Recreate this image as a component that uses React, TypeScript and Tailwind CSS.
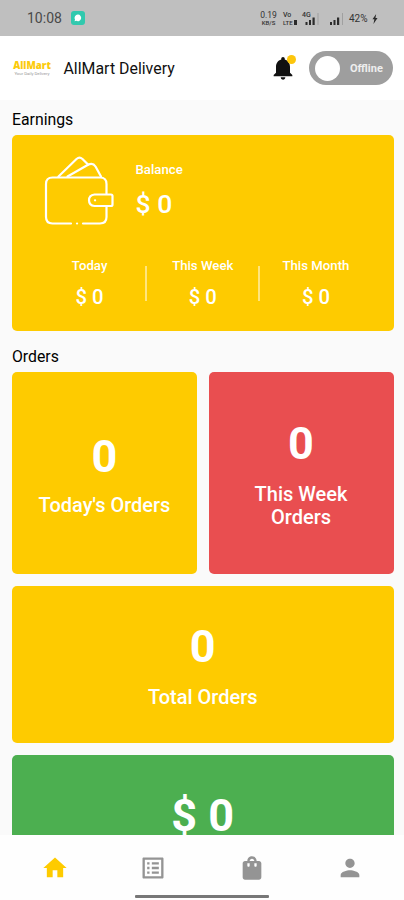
import React from "react";
import { MdHome, MdListAlt, MdShoppingBag, MdPerson, MdNotifications } from "react-icons/md";

function SignalBars({ className }: { className: string }) {
  return (
    <svg viewBox="0 0 14 12" className={className} fill="#2b2b2b">
      <rect x="0" y="9" width="2" height="3" />
      <rect x="3.5" y="7" width="2" height="5" />
      <rect x="7" y="4.5" width="2.2" height="7.5" />
      <rect x="12" y="0" width="1" height="12" fill="#a0a0a0" />
    </svg>
  );
}

function StatusBar() {
  return (
    <div className="flex h-9 shrink-0 items-center bg-[#bfbfbf] pl-[27px] text-[#4a4a4a]">
      <span className="w-[35px] text-[14px] leading-none whitespace-nowrap">10:08</span>
      <svg viewBox="0 0 14 14" className="ml-[9px] size-[14px]">
        <rect width="14" height="14" rx="3" fill="#31c9ae" />
        <path d="M7 3.6a3.3 3.3 0 1 1-1.7 6.2L3.6 10.2 4 8.6A3.3 3.3 0 0 1 7 3.6Z" fill="#fff" />
      </svg>
      <div className="ml-[175px] flex items-center pt-px text-[#333]">
        <div className="w-[17px] text-center">
          <div className="text-[8.5px] leading-[8px]">0.19</div>
          <div className="text-[6px] leading-[7px] font-medium">KB/S</div>
        </div>
        <div className="ml-[6px] w-[15px] font-medium">
          <div className="text-[7px] leading-[8px]">Vo</div>
          <div className="flex items-center text-[6px] leading-[7px]">LTE<span className="ml-px h-[5px] w-[3px] bg-[#2b2b2b]" /></div>
        </div>
        <div className="ml-[4px] flex w-[22px] items-end">
          <span className="-mr-[6px] h-[13px] text-[7px] leading-[7px] font-medium">4G</span>
          <SignalBars className="h-[12px] w-[15px]" />
        </div>
        <SignalBars className="ml-[5px] h-[12px] w-[16px]" />
        <span className="ml-[4px] w-[20px] text-[10px] leading-none whitespace-nowrap">42%</span>
        <svg viewBox="0 0 6 11" className="ml-[3px] h-[10px] w-[6px]" fill="#2b2b2b">
          <path d="M4.3 0 .2 5.8h2.1L1.3 11l4.5-6.5H3.5Z" />
        </svg>
      </div>
    </div>
  );
}

function Header() {
  return (
    <header className="flex h-16 shrink-0 items-center bg-white pl-[13px]">
      <div className="flex w-[38px] flex-col items-center whitespace-nowrap">
        <span className="font-['Open_Sans',sans-serif] text-[9.7px] leading-[10px] font-extrabold text-[#fccb0b]">AllMart</span>
        <span className="text-[4.3px] leading-[5px] text-[#999]">Your Daily Delivery</span>
      </div>
      <h1 className="ml-[12.5px] w-[112px] pt-[2px] text-[15.9px] leading-none whitespace-nowrap text-[#111]">AllMart Delivery</h1>
      <div className="relative ml-[93px] size-7">
        <MdNotifications className="size-7 text-[#111]" />
        <span className="absolute top-[1px] right-[1px] size-[9px] rounded-full bg-[#fdc60c]" />
      </div>
      <div className="ml-[12.5px] flex h-[34px] w-[84px] items-center rounded-full bg-[#9e9e9e] pl-[6px]">
        <span className="size-[25px] rounded-full bg-white" />
        <span className="ml-[10px] text-[11px] leading-none font-bold text-[#eee]">Offline</span>
      </div>
    </header>
  );
}

function WalletIcon() {
  return (
    <svg viewBox="0 0 70 70" className="h-[70px] w-[70px]" fill="none" stroke="#fff" strokeWidth="2.2" strokeLinecap="round" strokeLinejoin="round">
      <path d="M27 68.500H8.500Q2 68.500 2 62V29Q2 22.500 8.500 22.500H56Q62.500 22.500 62.500 29V38.500" />
      <path d="M39 68.500H56Q62.500 68.500 62.500 62V52" />
      <path d="M33 68.500h.1" />
      <path d="M50.500 39.500H67Q68.500 39.500 68.500 41V49.500Q68.500 51 67 51H50.500Q45 50.500 45 45.300T50.500 39.500Z" />
      <path d="M51 45.300h.1" />
      <path d="M14.500 21.500 32.500 4Q35.500 1.300 38.500 4L44 9.500" />
      <path d="M23.500 21.500 44.500 9.500Q49 7.500 51.500 11.500L57 21.500" />
    </svg>
  );
}

const periods = ["Today", "This Week", "This Month"];

function Earnings() {
  return (
    <section className="h-[196px] rounded-[5px] bg-[#fecb00] text-white">
      <div className="flex h-[113px] pt-[20px] pl-[32px]">
        <WalletIcon />
        <div className="ml-[21.500px] pt-[8px]">
          <div className="text-[13.2px] leading-[14px] font-medium">Balance</div>
          <div className="mt-[13px] text-[26.5px] leading-[28px] font-medium">$ 0</div>
        </div>
      </div>
      <div className="flex items-start px-[22px] pt-[10px]">
        {periods.map((period, i) => (
          <React.Fragment key={period}>
            {i > 0 && <span className="mt-[8px] h-[35px] w-[2px] bg-[#ffe57e]" />}
            <div className="flex-1 text-center">
              <div className="text-[13.2px] leading-[15px] font-medium whitespace-nowrap">{period}</div>
              <div className="mt-[13px] text-[20.3px] leading-[22px] font-medium">$ 0</div>
            </div>
          </React.Fragment>
        ))}
      </div>
    </section>
  );
}

function Orders() {
  return (
    <div className="grid grid-cols-2 gap-x-[11.5px] gap-y-[12px] text-center text-white">
      <div className="flex h-[202px] flex-col items-center justify-center rounded-[5px] bg-[#fecb00] pt-px">
        <div className="text-[45px] leading-[53px] font-bold">0</div>
        <div className="mt-[11px] text-[20px] leading-[23px] font-medium">Today's Orders</div>
      </div>
      <div className="flex h-[202px] flex-col items-center justify-center rounded-[5px] bg-[#e94e50] pt-[2px]">
        <div className="text-[45px] leading-[52px] font-bold">0</div>
        <div className="mt-[13px] w-[120px] text-[20px] leading-[23px] font-medium">This Week Orders</div>
      </div>
      <div className="col-span-2 flex h-[157px] flex-col items-center justify-center rounded-[5px] bg-[#fecb00] pt-[2px]">
        <div className="text-[45px] leading-[52px] font-bold">0</div>
        <div className="mt-[13px] text-[20px] leading-[23px] font-medium">Total Orders</div>
      </div>
      <div className="col-span-2 h-[81px] rounded-t-[5px] bg-[#4caf50] pt-[35px]">
        <div className="text-[45px] leading-[52px] font-bold">$ 0</div>
      </div>
    </div>
  );
}

function BottomNav() {
  return (
    <nav className="flex h-[65px] shrink-0 flex-col items-center bg-[#fefefe]">
      <div className="grid w-full grid-cols-4 justify-items-center pt-[19px] pr-[5px] pl-[6px] text-[#949494]">
        <MdHome className="size-[28px] text-[#fecb00]" />
        <MdListAlt className="size-[28px]" />
        <MdShoppingBag className="size-[28px]" />
        <MdPerson className="size-[28px]" />
      </div>
      <div className="mt-[13px] h-[3px] w-[134px] rounded-[1px] bg-[#777]" />
    </nav>
  );
}

export default function App() {
  return (
    <div className="flex h-[900px] w-[404px] flex-col overflow-hidden bg-[#fafafa] font-['Roboto',sans-serif]">
      <StatusBar />
      <Header />
      <main className="min-h-0 flex-1 overflow-hidden pr-[10.5px] pl-[12px]">
        <h2 className="h-[34.5px] pt-[11px] text-[15.8px] leading-[18px] text-black">Earnings</h2>
        <Earnings />
        <h2 className="h-[41px] pt-[17.5px] text-[15.8px] leading-[18px] text-black">Orders</h2>
        <Orders />
      </main>
      <BottomNav />
    </div>
  );
}
